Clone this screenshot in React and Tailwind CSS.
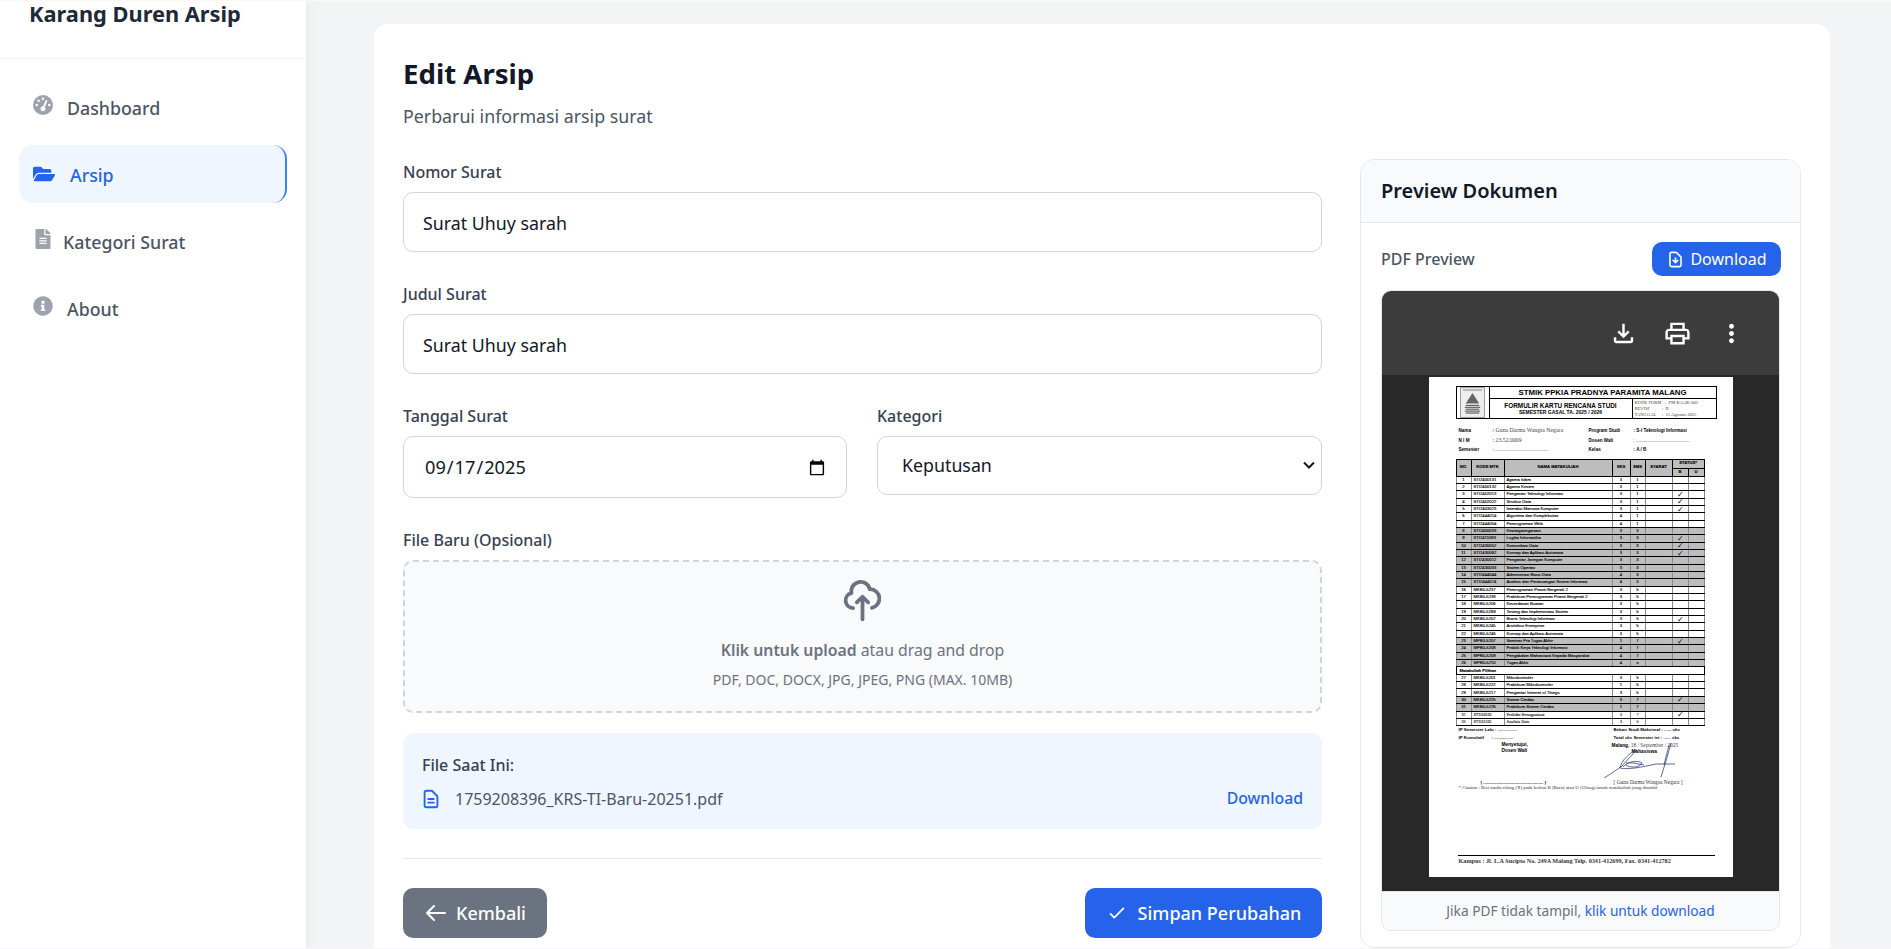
import { FaFolderOpen, FaFileAlt, FaInfoCircle } from 'react-icons/fa';
import { FaGaugeHigh } from 'react-icons/fa6';
import {
  HiOutlineCloudUpload,
  HiOutlineDocumentText,
  HiOutlineDocumentDownload,
  HiOutlineArrowLeft,
  HiOutlineCheck,
} from 'react-icons/hi';

const FONT = "font-['Noto_Sans',sans-serif]";

const mataKuliah = [
  ['1', 'STI2400131', 'Agama Islam', '3', '1', 0, 0],
  ['2', 'STI2400132', 'Agama Kristen', '3', '1', 0, 0],
  ['3', 'STI2402013', 'Pengantar Teknologi Informasi', '3', '1', 0, 1],
  ['4', 'STI2402022', 'Struktur Data', '3', '1', 0, 1],
  ['5', 'STI2403023', 'Interaksi Manusia Komputer', '3', '1', 0, 1],
  ['6', 'STI2444014', 'Algoritma dan Kompleksitas', '4', '1', 0, 0],
  ['7', 'STI2444054', 'Pemrograman Web', '4', '1', 0, 0],
  ['8', 'STI2400033', 'Kewarganegaraan', '3', '3', 1, 0],
  ['9', 'STI2411083', 'Logika Informatika', '3', '3', 1, 1],
  ['10', 'STI2430052', 'Komunikasi Data', '3', '3', 1, 1],
  ['11', 'STI2430062', 'Konsep dan Aplikasi Automata', '3', '3', 1, 1],
  ['12', 'STI2430012', 'Pengantar Jaringan Komputer', '3', '3', 1, 0],
  ['13', 'STI2430033', 'Sistem Operasi', '3', '3', 1, 0],
  ['14', 'STI2444044', 'Administrasi Basis Data', '4', '3', 1, 0],
  ['15', 'STI2444074', 'Analisis dan Perancangan Sistem Informasi', '4', '3', 1, 0],
  ['16', 'MKB0-5237', 'Pemrograman Piranti Bergerak 2', '3', '5', 0, 0],
  ['17', 'MKB0-5238', 'Praktikum Pemrograman Piranti Bergerak 2', '3', '5', 0, 0],
  ['18', 'MKB0-5206', 'Kecerdasan Buatan', '3', '5', 0, 0],
  ['19', 'MKB0-5269', 'Testing dan Implementasi Sistem', '3', '5', 0, 0],
  ['20', 'MKB0-5207', 'Bisnis Teknologi Informasi', '3', '5', 0, 1],
  ['21', 'MKB0-5245', 'Arsitektur Enterprise', '3', '5', 0, 0],
  ['22', 'MKB0-5246', 'Konsep dan Aplikasi Automata', '3', '5', 0, 0],
  ['23', 'MPB0-5207', 'Seminar Pra Tugas Akhir', '1', '7', 1, 1],
  ['24', 'MPB0-5208', 'Praktik Kerja Teknologi Informasi', '4', '7', 1, 0],
  ['25', 'MPB0-5209', 'Pengabdian Mahasiswa Kepada Masyarakat', '4', '7', 1, 0],
  ['26', 'MPB0-5210', 'Tugas Akhir', '4', 'x', 1, 0],
  null,
  ['27', 'MKB0-5201', 'Mikrokontroler', '3', '5', 0, 0],
  ['28', 'MKB0-5222', 'Praktikum Mikrokontroler', '1', '5', 0, 0],
  ['29', 'MKB0-5217', 'Pengantar Internet of Things', '3', '5', 0, 0],
  ['30', 'MKB0-5225', 'Sistem Cerdas', '3', '7', 1, 1],
  ['31', 'MKB0-5226', 'Praktikum Sistem Cerdas', '1', '7', 1, 0],
  ['32', 'STD10101', 'Perilaku Berorganisasi', '3', '7', 0, 1],
  ['33', 'STD11101', 'Analisis Data', '3', '5', 0, 0],
];

function NavItem({ icon: Icon, label, gap, active }) {
  return (
    <a
      className={
        active
          ? 'flex items-center h-[58px] -mt-px mb-px pt-[2px] pl-[14px] rounded-[14px] bg-[#eff6ff] border-r-[2px] border-[#3b82f6] text-[#2563eb]'
          : 'flex items-center h-[58px] pl-[14px] rounded-[14px] text-[#4b5563]'
      }
    >
      <Icon className={active ? 'text-[#2563eb] text-[22px] shrink-0 -mt-[2px]' : 'text-[#9ca3af] text-[20px] shrink-0 -mt-[6px]'} />
      <span className={`text-[17.8px] font-medium ${gap}`}>{label}</span>
    </a>
  );
}

function Label({ children }) {
  return <label className="block text-[16px] font-medium text-[#374151] leading-[20px] mb-[10px]">{children}</label>;
}

function Field({ value }) {
  return (
    <input
      type="text"
      defaultValue={value}
      className="w-full h-[60px] px-[19px] pt-[2px] border border-[#d1d5db] rounded-[10px] text-[17.8px] text-[#111827] bg-white"
    />
  );
}

function PdfPage() {
  return (
    <div className="w-[304px] h-[500px] mx-auto mt-[2px] bg-white text-black font-['Liberation_Sans',sans-serif] overflow-hidden pt-[9px] pl-[27px]">
      {/* kop formulir */}
      <div className="w-[261px] h-[33px] flex border-y border-l border-r border-black">
        <div className="w-[33px] flex items-center justify-center border-r border-black">
          <svg viewBox="0 0 26 32" className="w-[25px] h-[31px]">
            <rect x="0.5" y="0.5" width="25" height="31" fill="#eee" stroke="#999" />
            <path d="M3 3h20" stroke="#888" strokeWidth="1" />
            <path d="M13 6 L20 17 H6 Z" fill="#666" />
            <path d="M6 19h14M5 21h16M6 23h14M5 25h16M6 27h14" stroke="#444" strokeWidth="1" />
          </svg>
        </div>
        <div className="flex-1 flex flex-col">
          <div className="h-[12px] border-b border-black text-[7.8px] font-bold leading-[12px] text-center">
            STMIK PPKIA PRADNYA PARAMITA MALANG
          </div>
          <div className="flex-1 flex">
            <div className="w-[143px] border-r border-black text-center font-bold pt-[3px]">
              <div className="text-[6.4px] leading-[7px]">FORMULIR KARTU RENCANA STUDI</div>
              <div className="text-[5px] leading-[6px]">SEMESTER GASAL TA. 2025 / 2026</div>
            </div>
            <div className="flex-1 pl-[2px] pt-[1px] font-['Liberation_Serif',serif] text-[4.6px] leading-[6px] text-[#444]">
              <div>KODE FORM &nbsp;&nbsp;: &nbsp;FM-BAAK-002</div>
              <div>REVISI &nbsp;&nbsp;&nbsp;&nbsp;&nbsp;&nbsp;&nbsp;&nbsp;&nbsp;&nbsp;: &nbsp;II</div>
              <div>TANGGAL &nbsp;&nbsp;&nbsp;&nbsp;: &nbsp;15 Agustus 2025</div>
            </div>
          </div>
        </div>
      </div>

      {/* identitas mahasiswa */}
      <div className="grid grid-cols-[34px_96px_45px_1fr] pl-[3px] mt-[7px] text-[4.6px] leading-[9.5px] font-bold">
        <span>Nama</span>
        <span className="font-['Liberation_Serif',serif] font-normal text-[#444] text-[5.8px] whitespace-nowrap">: Guna Darma Wangsa Negara</span>
        <span>Program Studi</span>
        <span>: S-I Teknologi Informasi</span>
        <span>N I M</span>
        <span className="font-['Liberation_Serif',serif] font-normal text-[#444] text-[5.8px]">: 23.52.0009</span>
        <span>Dosen Wali</span>
        <span className="font-normal">: ..........................................</span>
        <span>Semester</span>
        <span className="font-normal">: ..........................................</span>
        <span>Kelas</span>
        <span>: A / B</span>
      </div>

      {/* tabel mata kuliah */}
      <table className="w-[248px] mt-[4px] table-fixed border-collapse text-[4.2px] leading-none text-black [-webkit-text-stroke:0.12px_black]">
        <colgroup>
          <col className="w-[15px]" />
          <col className="w-[33px]" />
          <col className="w-[108px]" />
          <col className="w-[18px]" />
          <col className="w-[15px]" />
          <col className="w-[27px]" />
          <col className="w-[16px]" />
          <col className="w-[16px]" />
        </colgroup>
        <thead className="bg-[#bdbdbd] font-bold">
          <tr className="h-[9px]">
            <th rowSpan={2} className="border border-black">NO.</th>
            <th rowSpan={2} className="border border-black">KODE MTK</th>
            <th rowSpan={2} className="border border-black">NAMA MATAKULIAH</th>
            <th rowSpan={2} className="border border-black">SKS</th>
            <th rowSpan={2} className="border border-black">SMS</th>
            <th rowSpan={2} className="border border-black">SYARAT</th>
            <th colSpan={2} className="border border-black">STATUS*</th>
          </tr>
          <tr className="h-[8px]">
            <th className="border border-black">B</th>
            <th className="border border-black">U</th>
          </tr>
        </thead>
        <tbody>
          {mataKuliah.map((m, i) =>
            m ? (
              <tr
                key={i}
                className={`h-[7.35px] ${m[5] ? 'bg-[#bdbdbd]' : ''} ${Number(m[0]) >= 32 ? "font-['Liberation_Serif',serif] text-[#444]" : ''}`}
              >
                <td className="border-y border-black border-x-[#888] border-x text-center p-0">{m[0]}</td>
                <td className="border-y border-black border-x-[#888] border-x pl-[2px] p-0">{m[1]}</td>
                <td className="border-y border-black border-x-[#888] border-x pl-[2px] p-0 whitespace-nowrap">{m[2]}</td>
                <td className="border-y border-black border-x-[#888] border-x text-center p-0">{m[3]}</td>
                <td className="border-y border-black border-x-[#888] border-x text-center p-0">{m[4]}</td>
                <td className="border-y border-black border-x-[#888] border-x p-0"></td>
                <td className="border-y border-black border-x-[#888] border-x text-center p-0 text-[#1e2a6b] text-[8px] leading-[5px]">
                  {m[6] ? '✓' : ''}
                </td>
                <td className="border-y border-black border-x-[#888] border-x p-0"></td>
              </tr>
            ) : (
              <tr key={i} className="h-[7.35px]">
                <td colSpan={8} className="border-y border-black border-x pl-[3px] p-0 font-bold">Matakuliah Pilihan</td>
              </tr>
            )
          )}
        </tbody>
      </table>

      {/* ringkasan dan tanda tangan */}
      <div className="grid grid-cols-[155px_1fr] pl-[3px] text-[4.4px] leading-[8px] font-bold">
        <span>IP Semester Lalu : ................</span>
        <span>Beban Studi Maksimal : ...... sks</span>
        <span>IP Kumulatif &nbsp;&nbsp;&nbsp;&nbsp;&nbsp;: ................</span>
        <span>Total sks Semester ini : ...... sks</span>
      </div>
      <div className="relative h-[38px] pl-[3px] text-[4.8px] leading-[6px] font-bold">
        <div className="grid grid-cols-[153px_1fr]">
          <div className="pl-[43px]">
            <div>Menyetujui,</div>
            <div>Dosen Wali</div>
          </div>
          <div>
            <div>
              Malang, <span className="font-['Liberation_Serif',serif] font-normal text-[#444] text-[5.4px]">18 / September / 2025</span>
            </div>
            <div className="pl-[20px]">Mahasiswa</div>
          </div>
        </div>
        <svg viewBox="0 0 72 37" className="absolute left-[148px] -top-[1px] w-[72px] h-[37px]" fill="none" stroke="#1e2a6b" strokeWidth="0.7">
          <path d="M0 37 C8 32 14 28 18 25 C22 20 28 14 33 9 C26 11 17 20 16 27 C24 29 38 26 52 23 L71 23" />
          <path d="M19 26 C24 20 34 19 38 22 C35 27 26 27 22 24" />
          <path d="M22 22 C28 21 34 23 40 24" />
          <path d="M67 2 C65 10 62 20 57 36" />
          <path d="M65 4 L60 24" />
        </svg>
      </div>
      <div className="grid grid-cols-[155px_1fr] pl-[3px] font-['Liberation_Serif',serif] text-[4.8px] leading-[5px] text-[#333]">
        <span className="pl-[22px] font-bold text-black">[ .................................................. ]</span>
        <span className="pl-[0px] text-[5.4px] whitespace-nowrap">[ Guna Darma Wangsa Negara ]</span>
      </div>
      <div className="pl-[3px] font-['Liberation_Serif',serif] text-[4.9px] leading-[5px] text-[#333] whitespace-nowrap">
        * Catatan : Beri tanda silang (X) pada kolom B (Baru) atau U (Ulang) untuk matakuliah yang diambil
      </div>
      <div className="w-[257px] ml-[2px] mt-[65px] border-t border-black pt-[1px] pl-px font-['Liberation_Serif',serif] text-[6.2px] leading-[8px] font-bold text-[#333] whitespace-nowrap">
        Kampus : Jl. L.A Sucipto No. 249A Malang Telp. 0341-412699, Fax. 0341-412782
      </div>
    </div>
  );
}

export default function App() {
  return (
    <div className={`flex flex-col h-[949px] overflow-hidden bg-[#f3f4f6] ${FONT}`}>
      <div className="h-px shrink-0 bg-[#fafaf1]"></div>
      <div className="flex flex-1 min-h-0 overflow-hidden">
        <aside className="relative z-10 w-[306px] shrink-0 bg-white shadow-[2px_0_8px_rgba(0,0,0,0.05)]">
          <div className="h-[58px] border-b border-[#f3f4f6]">
            <h1 className="pl-[29px] text-[21.8px] font-bold leading-[26px] text-[#1f2937]">Karang Duren Arsip</h1>
          </div>
          <nav className="px-[19px] pt-[20px] flex flex-col gap-[9px]">
            <NavItem icon={FaGaugeHigh} label="Dashboard" gap="ml-[14px]" />
            <NavItem icon={FaFolderOpen} label="Arsip" gap="ml-[15px]" active />
            <NavItem icon={FaFileAlt} label="Kategori Surat" gap="ml-[10px]" />
            <NavItem icon={FaInfoCircle} label="About" gap="ml-[14px]" />
          </nav>
        </aside>

        <main className="flex-1 pl-[68px] pr-[61px] pt-[23px]">
          <div className="bg-white rounded-t-[14px] pl-[29px] pr-[29px] h-[960px] flex">
            <div className="w-[919px] shrink-0">
              <h2 className="pt-[31px] text-[27.6px] font-bold leading-[36px] text-[#111827]">Edit Arsip</h2>
              <p className="mt-[12px] text-[17.8px] leading-[26px] text-[#4b5563]">Perbarui informasi arsip surat</p>

              <div className="mt-[33px]">
                <Label>Nomor Surat</Label>
                <Field value="Surat Uhuy sarah" />
              </div>
              <div className="mt-[32px]">
                <Label>Judul Surat</Label>
                <Field value="Surat Uhuy sarah" />
              </div>
              <div className="mt-[32px] grid grid-cols-[444px_445px] gap-x-[30px] items-start">
                <div>
                  <Label>Tanggal Surat</Label>
                  <input
                    type="date"
                    defaultValue="2025-09-17"
                    className="w-full h-[62px] pl-[20px] pr-[18px] pt-[2px] border border-[#d1d5db] rounded-[10px] text-[18.2px] text-[#111827] bg-white"
                  />
                </div>
                <div>
                  <Label>Kategori</Label>
                  <div className="relative">
                    <select className="w-full h-[59px] pl-[24px] pr-[25px] border border-[#d1d5db] rounded-[10px] text-[17.8px] text-[#111827] bg-white appearance-none">
                      <option>Keputusan</option>
                      <option>Undangan</option>
                      <option>Pemberitahuan</option>
                    </select>
                    <svg
                      viewBox="0 0 14 8"
                      className="absolute right-[6px] top-[25px] w-[14px] h-[8px] text-[#111827] pointer-events-none"
                      fill="none"
                      stroke="currentColor"
                      strokeWidth="2"
                    >
                      <path d="M2 1.5 L7 6.5 L12 1.5" />
                    </svg>
                  </div>
                </div>
              </div>

              <div className="mt-[32px]">
                <Label>File Baru (Opsional)</Label>
                <div className="h-[153px] border-2 border-dashed border-[#d1d5db] rounded-[10px] bg-[#f9fafb] flex flex-col items-center text-[#6b7280]">
                  <HiOutlineCloudUpload className="mt-[16px] w-[45px] h-[45px] text-[#6b7280]" />
                  <p className="mt-[15px] text-[15.8px] leading-[24px]">
                    <span className="font-semibold">Klik untuk upload</span> atau drag and drop
                  </p>
                  <p className="mt-[9px] text-[14px] leading-[18px]">PDF, DOC, DOCX, JPG, JPEG, PNG (MAX. 10MB)</p>
                </div>
              </div>

              <div className="mt-[20px] h-[96px] rounded-[10px] bg-[#eff6ff] px-[19px] pt-[22px]">
                <p className="text-[16px] font-medium leading-[20px] text-[#374151]">File Saat Ini:</p>
                <div className="mt-[12px] flex items-center">
                  <HiOutlineDocumentText className="w-[22px] h-[22px] -ml-[2px] text-[#2563eb]" />
                  <span className="ml-[13px] text-[16px] text-[#4b5563]">1759208396_KRS-TI-Baru-20251.pdf</span>
                  <a className="ml-auto text-[15.8px] font-medium text-[#2563eb]">Download</a>
                </div>
              </div>

              <div className="mt-[29px] pt-[29px] border-t border-[#e5e7eb] flex justify-between">
                <button className="w-[144px] h-[50px] rounded-[10px] bg-[#6b7280] text-white flex items-center justify-center text-[18px] font-medium">
                  <HiOutlineArrowLeft className="w-[24px] h-[24px] mr-[8px]" />
                  Kembali
                </button>
                <button className="w-[237px] h-[50px] rounded-[10px] bg-[#2563eb] text-white flex items-center justify-center text-[18px] font-medium">
                  <HiOutlineCheck className="w-[22px] h-[22px] mr-[10px]" />
                  Simpan Perubahan
                </button>
              </div>
            </div>

            <section className="ml-[38px] flex-1 mt-[135px] h-[789px] border border-[#e5e7eb] rounded-[14px] bg-white overflow-hidden">
              <div className="h-[63px] bg-[#f9fafb] border-b border-[#e5e7eb] px-[20px] flex items-center">
                <h3 className="text-[20px] font-semibold text-[#111827]">Preview Dokumen</h3>
              </div>
              <div className="px-[20px] pt-[19px]">
                <div className="flex items-center justify-between h-[34px]">
                  <span className="text-[16px] font-medium text-[#4b5563]">PDF Preview</span>
                  <a className="h-[34px] w-[129px] -mr-px rounded-[10px] bg-[#2563eb] text-white flex items-center justify-center text-[16px]">
                    <HiOutlineDocumentDownload className="w-[19px] h-[19px] mr-[5px]" />
                    Download
                  </a>
                </div>
                <div className="mt-[14px] border border-[#e5e7eb] rounded-[10px] overflow-hidden">
                  <div className="h-[84px] bg-[#3c3c3c] flex items-center justify-end pr-[33px] gap-[25px] text-white">
                    <svg viewBox="0 0 24 24" className="w-[29px] h-[29px]" fill="currentColor">
                      <path d="M12 16l-5-5 1.4-1.45L11 12.15V4h2v8.15l2.6-2.6L17 11zM6 20q-.8 0-1.4-.6T4 18v-3h2v3h12v-3h2v3q0 .8-.6 1.4T18 20z" />
                    </svg>
                    <svg viewBox="0 0 24 24" className="w-[29px] h-[29px]" fill="currentColor">
                      <path d="M19 8h-1V3H6v5H5c-1.66 0-3 1.34-3 3v6h4v4h12v-4h4v-6c0-1.66-1.34-3-3-3zM8 5h8v3H8V5zm8 12v2H8v-4h8v2zm2-2v-2H6v2H4v-4c0-.55.45-1 1-1h14c.55 0 1 .45 1 1v4h-2z" />
                    </svg>
                    <svg viewBox="0 0 24 24" className="w-[29px] h-[29px]" fill="currentColor">
                      <path d="M12 8c1.1 0 2-.9 2-2s-.9-2-2-2-2 .9-2 2 .9 2 2 2zm0 2c-1.1 0-2 .9-2 2s.9 2 2 2 2-.9 2-2-.9-2-2-2zm0 6c-1.1 0-2 .9-2 2s.9 2 2 2 2-.9 2-2-.9-2-2-2z" />
                    </svg>
                  </div>
                  <div className="h-[516px] bg-[#282828] overflow-hidden">
                    <PdfPage />
                  </div>
                  <div className="h-[39px] bg-[#f9fafb] border-t border-[#e5e7eb] flex items-center justify-center text-[13.7px] text-[#6b7280]">
                    Jika PDF tidak tampil,&nbsp;<a className="text-[#2563eb]">klik untuk download</a>
                  </div>
                </div>
              </div>
            </section>
          </div>
        </main>
      </div>
      <div className="h-px shrink-0 bg-[#f4f8fc]"></div>
    </div>
  );
}
